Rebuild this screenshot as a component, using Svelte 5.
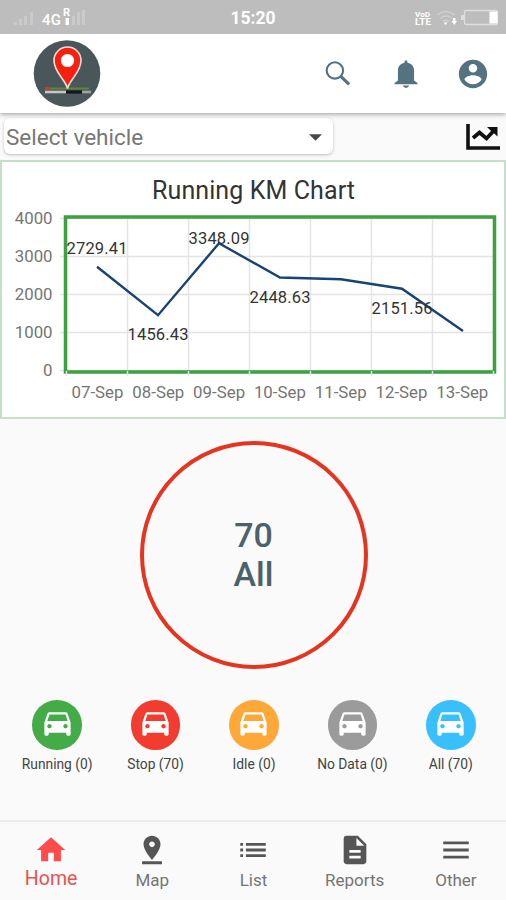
<script lang="ts">
  type Tab = { name: string; path: string };

  const days = ["07-Sep", "08-Sep", "09-Sep", "10-Sep", "11-Sep", "12-Sep", "13-Sep"];
  const ticks = [4000, 3000, 2000, 1000, 0];
  const km = [2729.41, 1456.43, 3348.09, 2448.63, 2400, 2151.56, 1040];
  const labels = [
    { i: 0, dy: -13 },
    { i: 1, dy: 25 },
    { i: 2, dy: 0.5 },
    { i: 3, dy: 25.5 },
    { i: 5, dy: 25.5 },
  ];

  const statuses = [
    { label: "Running", count: 0, color: "#43ab48" },
    { label: "Stop", count: 70, color: "#f13c2f" },
    { label: "Idle", count: 0, color: "#fda839" },
    { label: "No Data", count: 0, color: "#9b9b9b" },
    { label: "All", count: 70, color: "#38bffc" },
  ];

  const tabs: Tab[] = [
    { name: "Home", path: "M10 20v-6h4v6h5v-8h3L12 3 2 12h3v8z" },
    {
      name: "Map",
      path: "M18 8c0-3.31-2.69-6-6-6S6 4.69 6 8c0 4.5 6 11 6 11s6-6.5 6-11zm-8 0c0-1.1.9-2 2-2s2 .9 2 2-.89 2-2 2c-1.1 0-2-.9-2-2zM5 20v2h14v-2H5z",
    },
    { name: "List", path: "M3 13h2v-2H3v2zm0 4h2v-2H3v2zm0-8h2V7H3v2zm4 4h14v-2H7v2zm0 4h14v-2H7v2zM7 7v2h14V7H7z" },
    {
      name: "Reports",
      path: "M14 2H6c-1.1 0-1.99.9-1.99 2L4 20c0 1.1.89 2 1.99 2H18c1.1 0 2-.9 2-2V8l-6-6zm2 16H8v-2h8v2zm0-4H8v-2h8v2zm-3-5V3.5L18.5 9H13z",
    },
    { name: "Other", path: "M3 18h18v-2H3v2zm0-5h18v-2H3v2zm0-7v2h18V6H3z" },
  ];

  let active = $state("Home");
  let selected = $state(4);

  const x = (i: number) => 97 + i * 61;
  const y = (v: number) => 210.5 - (v / 1000) * 38;
  const points = km.map((v, i) => `${x(i)},${y(v)}`).join(" ");
</script>

<div class="app">
  <div class="status-bar">
    <svg class="signal" viewBox="0 0 80 34">
      <g fill="#cacaca">
        <path d="M14 22h3v3h-3zM19 19h3v6h-3zM24 16h3v9h-3zM30 12h3v13h-3zM72 16h3v9h-3zM77 12h3v13h-3zM82 10h3v15h-3z" />
      </g>
      <path fill="#fff" d="M65.500 18h3.500v7h-3.500z" />
      <text x="42" y="25" font-size="15" font-weight="500" textLength="19">4G</text>
      <text x="63" y="16" font-size="11" font-weight="700">R</text>
    </svg>
    <span class="clock">15:20</span>
    <svg class="system" viewBox="410 0 96 34">
      <text x="415" y="16.5" font-size="8" font-weight="700" textLength="15" lengthAdjust="spacingAndGlyphs">VoD</text>
      <text x="415" y="25" font-size="9" font-weight="700" textLength="16" lengthAdjust="spacingAndGlyphs">LTE</text>
      <g fill="none" stroke="#d0d0d0" stroke-width="1.3">
        <path d="M437 15q9-7 18 0M440 18.500q6-5 12 0M443 21.500q3-2.500 6 0" />
      </g>
      <path fill="#fff" d="M443.500 22.500h4l-2 2.500zM453 18h2.500v3h1.500L454.300 25l-2.800-4h1.500z" />
      <rect x="464.5" y="10.500" width="33" height="14" rx="2" fill="none" stroke="#dedede" stroke-width="1.3" />
      <path fill="#dedede" d="M461 15h3v5h-3z" />
      <path fill="#fff" d="M489.500 11.500h8v12h-8z" />
    </svg>
  </div>

  <header>
    <svg class="logo" viewBox="0 0 68 68">
      <circle cx="34" cy="33.500" r="33.300" fill="#49565a" />
      <path d="M12 48.500h44" stroke="#63823a" stroke-width="1.800" />
      <path d="M12 48.500h5" stroke="#c63c2c" stroke-width="3" />
      <path d="M12 52h21" stroke="#c5c5c5" stroke-width="2.600" />
      <path d="M33 52h16" stroke="#121818" stroke-width="3.200" />
      <path d="M49 52h9" stroke="#9ca4a4" stroke-width="2.600" />
      <path
        d="M34.500 48.500c-2-9-13.500-16-13.500-28a13.500 13.500 0 0 1 27 0c0 12-11.500 19-13.500 28z"
        fill="#f6200f"
        stroke="#f2dfdc"
        stroke-width="1.600"
      />
      <circle cx="34.500" cy="20.500" r="6.600" fill="#fff" />
    </svg>
    <nav class="actions">
      <button aria-label="Search">
        <svg viewBox="0 0 24 24">
          <circle cx="9.800" cy="9.500" r="5.800" fill="none" stroke="#54727f" stroke-width="1.500" />
          <path d="M14 13.700l5.800 5.700" stroke="#54727f" stroke-width="2.200" />
        </svg>
      </button>
      <button aria-label="Notifications">
        <svg viewBox="0 0 24 24"
          ><path
            d="M12 2.300c.7 0 1 .7 1.100 1.700 2.900.6 4.600 2.600 4.600 5.600v7l2.400 1.800v.9H3.900v-.9l2.400-1.800v-7c0-3 1.700-5 4.600-5.600.1-1 .4-1.700 1.100-1.700zM9.800 20.200h4.400c-.4 1-1.200 1.600-2.200 1.600s-1.800-.6-2.200-1.600z"
          /></svg
        >
      </button>
      <button aria-label="Account">
        <svg viewBox="0 0 24 24"
          ><path
            d="M12 2C6.480 2 2 6.480 2 12s4.480 10 10 10 10-4.480 10-10S17.520 2 12 2zm0 3c1.660 0 3 1.340 3 3s-1.340 3-3 3-3-1.340-3-3 1.340-3 3-3zm0 14.200c-2.500 0-4.710-1.280-6-3.220.03-1.990 4-3.080 6-3.080 1.990 0 5.970 1.090 6 3.080-1.290 1.940-3.500 3.220-6 3.220z"
          /></svg
        >
      </button>
    </nav>
  </header>

  <div class="filter">
    <button class="select">
      <span>Select vehicle</span>
      <svg viewBox="0 0 14 7"><path d="M0 0h14L7 7z" /></svg>
    </button>
    <svg class="trend" viewBox="0 0 34 27">
      <path d="M2 1v24h32" fill="none" stroke="#111" stroke-width="3.600" />
      <path d="M7 15l6.500-5.500 7 6 8-8.500" fill="none" stroke="#111" stroke-width="3.800" />
      <path d="M21 4h10.500v9.500l-3.500-3.300-3.700-2.900z" fill="#111" />
    </svg>
  </div>

  <section class="chart">
    <svg viewBox="0 0 506 259">
      <text class="title" x="152" y="39" textLength="203">Running KM Chart</text>
      <g class="grid">
        {#each days as _, i}
          <path d="M{66.5 + i * 61} 57v158" />
        {/each}
        <path d="M493.500 57v158" />
        {#each ticks as t}
          <path d="M60 {y(t)}h433" />
        {/each}
      </g>
      <rect class="frame" x="65.500" y="57" width="429" height="155" />
      <g class="grid">
        {#each days as _, i}
          <path d="M{66.5 + i * 61} 211v5" />
        {/each}
        <path d="M493.500 211v5" />
      </g>
      <g class="axis">
        {#each ticks as t}
          <text x="52.500" y={y(t) + 5.5} text-anchor="end">{t}</text>
        {/each}
        {#each days as day, i}
          <text x={x(i) - 25.5 - i * 0.2} y="237.500" textLength="52">{day}</text>
        {/each}
      </g>
      <polyline {points} />
      <g class="values">
        {#each labels as l}
          <text x={x(l.i)} y={y(km[l.i]) + l.dy} text-anchor="middle" textLength="61">{km[l.i]}</text>
        {/each}
      </g>
    </svg>
  </section>

  <main>
    <div class="total">
      <span>{statuses[selected].count}</span>
      <span>{statuses[selected].label}</span>
    </div>
  </main>

  <div class="statuses">
    {#each statuses as s, i}
      <button onclick={() => (selected = i)}>
        <span class="dot" style="background: {s.color}">
          <svg viewBox="0 0 24 24"
            ><path
              d="M18.920 6.010C18.720 5.420 18.160 5 17.500 5h-11c-.66 0-1.210.42-1.420 1.010L3 12v8c0 .55.45 1 1 1h1c.55 0 1-.45 1-1v-1h12v1c0 .55.45 1 1 1h1c.55 0 1-.45 1-1v-8l-2.080-5.990zM6.500 16c-.83 0-1.500-.67-1.500-1.500S5.670 13 6.500 13s1.500.67 1.500 1.500S7.330 16 6.500 16zm11 0c-.83 0-1.500-.67-1.500-1.500s.67-1.500 1.500-1.500 1.500.67 1.500 1.500-.67 1.500-1.500 1.500zM5 11l1.500-4.500h11L19 11H5z"
            /></svg
          >
        </span>
        <span class="caption">{s.label} ({s.count})</span>
      </button>
    {/each}
  </div>

  <nav class="tabs">
    {#each tabs as tab}
      <button class:active={active === tab.name} onclick={() => (active = tab.name)}>
        <svg viewBox="0 0 24 24"><path d={tab.path} /></svg>
        <span>{tab.name}</span>
      </button>
    {/each}
  </nav>
</div>

<style>
  :global(body) {
    margin: 0;
    background: #fafafa;
  }
  .app {
    display: flex;
    flex-direction: column;
    width: 506px;
    height: 900px;
    overflow: hidden;
    background: #fafafa;
    font-family: Roboto, "Liberation Sans", sans-serif;
  }
  svg {
    display: block;
  }
  button {
    border: none;
    padding: 0;
    margin: 0;
    background: none;
    font-family: inherit;
    cursor: pointer;
  }
  .status-bar {
    display: grid;
    grid-template-columns: 1fr auto 1fr;
    align-items: center;
    height: 34px;
    flex: none;
    background: #bdbdbd;
    color: #fff;
  }
  .status-bar text {
    fill: #fff;
  }
  .signal {
    width: 80px;
    height: 34px;
    overflow: visible;
  }
  .clock {
    font-size: 17.5px;
    font-weight: 700;
    padding-top: 2px;
  }
  .system {
    width: 96px;
    height: 34px;
    justify-self: end;
  }
  header {
    display: flex;
    align-items: center;
    justify-content: space-between;
    height: 79px;
    flex: none;
    box-sizing: border-box;
    padding: 0 0 0 33px;
    background: #fff;
    box-shadow: 0 1px 5px rgba(0, 0, 0, 0.4);
    clip-path: inset(0 0 -8px 0);
    z-index: 1;
  }
  .logo {
    width: 68px;
    height: 68px;
  }
  .actions {
    display: flex;
    margin-right: -1px;
  }
  .actions button {
    display: flex;
    justify-content: center;
    width: 67.5px;
  }
  .actions svg {
    width: 34px;
    height: 34px;
    fill: #54727f;
  }
  .filter {
    display: flex;
    align-items: center;
    justify-content: space-between;
    height: 47px;
    flex: none;
    box-sizing: border-box;
    padding: 4px 6px 5px 4px;
  }
  .select {
    display: flex;
    align-items: center;
    justify-content: space-between;
    width: 329px;
    height: 36px;
    padding: 2px 11px 0 2px;
    background: #fff;
    border-radius: 6px;
    box-shadow: 0 1px 3px rgba(0, 0, 0, 0.25);
    color: #777;
    font-size: 22.5px;
  }
  .select svg {
    width: 13px;
    height: 7px;
    fill: #484848;
  }
  .trend {
    width: 34px;
    height: 27px;
    margin-top: 1px;
  }
  .chart {
    flex: none;
    height: 259px;
    box-sizing: border-box;
    border: 2px solid #c5dfca;
    background: #fff;
  }
  .chart svg {
    width: 506px;
    height: 259px;
    margin: -2px;
  }
  .title {
    font-size: 25px;
    fill: #333;
  }
  .grid {
    stroke: #e4e4e4;
    stroke-width: 1.5;
  }
  .frame {
    fill: none;
    stroke: #3ba141;
    stroke-width: 3.5;
  }
  .axis {
    font-size: 16.8px;
    fill: #757575;
  }
  .values {
    font-size: 16.5px;
    fill: #333;
  }
  polyline {
    fill: none;
    stroke: #174473;
    stroke-width: 2.4;
  }
  main {
    display: flex;
    justify-content: center;
    padding: 22px 0 0 1px;
    height: 260px;
    flex: none;
    box-sizing: border-box;
  }
  .total {
    display: flex;
    flex-direction: column;
    align-items: center;
    justify-content: center;
    width: 228px;
    height: 228px;
    box-sizing: border-box;
    border: 4px solid #e5341f;
    border-radius: 50%;
    color: #4b626c;
    font-size: 34px;
    font-weight: 500;
    line-height: 39.5px;
  }
  .statuses {
    display: grid;
    grid-template-columns: repeat(5, 1fr);
    height: 120px;
    flex: none;
    padding: 0 6px 0 8px;
    margin-top: 21px;
  }
  .statuses button {
    display: flex;
    flex-direction: column;
    align-items: center;
    gap: 6px;
  }
  .dot {
    display: flex;
    align-items: center;
    justify-content: center;
    width: 49.5px;
    height: 49.5px;
    border-radius: 50%;
  }
  .dot svg {
    width: 35px;
    height: 35px;
    margin-top: -4px;
    fill: #fff;
  }
  .caption {
    font-size: 13.8px;
    color: #444;
    white-space: nowrap;
  }
  .tabs {
    display: grid;
    grid-template-columns: repeat(5, 1fr);
    flex: 1;
    border-top: 2px solid #ececec;
  }
  .tabs button {
    display: flex;
    flex-direction: column;
    align-items: center;
    padding: 11px 0 0 1px;
    color: #757575;
    font-size: 17px;
    line-height: 26px;
  }
  .tabs svg {
    width: 34px;
    height: 34px;
    fill: #555;
  }
  .tabs .active {
    color: #e8524f;
    font-size: 19.5px;
  }
  .tabs .active svg {
    width: 34px;
    fill: #ff4b4b;
  }
  .tabs .active span {
    margin-top: -1px;
  }
</style>
